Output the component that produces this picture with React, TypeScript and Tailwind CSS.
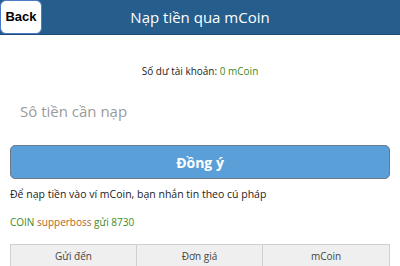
import React from 'react';

const font = { fontFamily: '"Open Sans", "DejaVu Sans", sans-serif' };

export default function App() {
  return (
    <div className="w-[400px] h-[266px] overflow-hidden bg-white" style={font}>
      {/* top bar */}
      <div className="relative flex h-[35px] items-center justify-center bg-[#255d8d] border-b border-[#1d4a72]">
        <button className="absolute left-0 top-0 flex h-[34px] w-[42px] items-center justify-center rounded-[6px] border border-[#4a7ac8] bg-white text-[13px] font-bold text-black font-['Liberation_Sans',sans-serif]">
          Back
        </button>
        <span className="text-[15px] text-white">Nạp tiền qua mCoin</span>
      </div>

      <div className="px-[10px]">
        <p className="mt-[29px] text-center text-[10px] text-[#222]">
          Số dư tài khoản: <span className="text-[#3d8a1c]">0 mCoin</span>
        </p>

        <input
          className="mt-[12px] h-[40px] w-full px-[10px] text-[15px] text-[#333] placeholder:text-[#9a9a9a] outline-none"
          placeholder="Sô tiền cần nạp"
        />

        <button className="mt-[14px] flex h-[34px] w-full items-center justify-center rounded-[5px] border border-[#6e7a88] bg-[#5a9fd7] text-[14px] font-bold text-white">
          Đồng ý
        </button>

        <p className="mt-[8px] text-[10.5px] text-[#222]">
          Để nạp tiền vào ví mCoin, bạn nhắn tin theo cú pháp
        </p>

        <p className="mt-[12px] text-[10px]">
          <span className="text-[#3d8a1c]">COIN </span>
          <span className="text-[#b0661c]">supperboss </span>
          <span className="text-[#3d8a1c]">gửi 8730</span>
        </p>

        <div className="mt-[14px] grid grid-cols-3 border border-[#cfcfcf] bg-[#efefef] text-[10px] text-[#444]">
          <div className="h-[24px] pt-[4px] text-center border-r border-[#cfcfcf]">Gửi đến</div>
          <div className="h-[24px] pt-[4px] text-center border-r border-[#cfcfcf]">Đơn giá</div>
          <div className="h-[24px] pt-[4px] text-center">mCoin</div>
        </div>
      </div>
    </div>
  );
}
